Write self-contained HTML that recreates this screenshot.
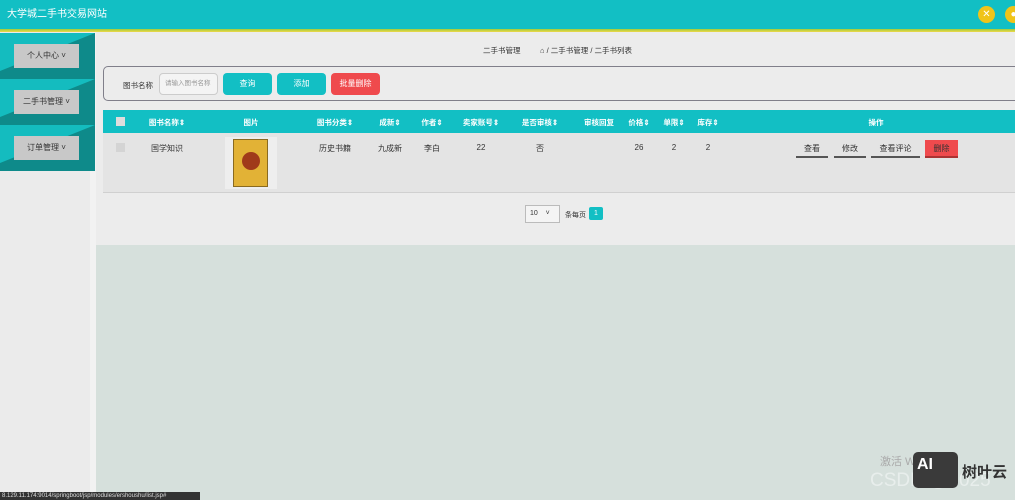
<!DOCTYPE html>
<html><head><meta charset="utf-8"><style>
*{margin:0;padding:0;box-sizing:border-box}
body{width:1015px;height:500px;overflow:hidden;background:#ececec;font-family:"Liberation Sans","Noto Sans CJK SC",sans-serif;font-size:8px;color:#333;position:relative}
.a{position:absolute}
.hdr{left:0;top:0;width:1015px;height:30px;background:#12bfc4;color:#fff;font-size:10px;line-height:30px;padding-left:7px}
.yl{left:0;top:29px;width:1015px;height:3px;background:linear-gradient(#9ccc3c,#f0d84a)}
.circ{top:6px;width:17px;height:17px;border-radius:50%;background:#f0c419;color:#fff;font-size:10px;text-align:center;line-height:17px}
.side{left:0;top:32px;width:90px;height:468px;background:#ebebeb}
.strip{left:90px;top:32px;width:6px;height:468px;background:#f2f2f2}
.blk{left:0;width:95px;height:46px;background:#0e8a8a;overflow:hidden}
.blk:before{content:"";position:absolute;left:0;top:0;border-top:38px solid #14bcbf;border-right:95px solid transparent}
.blk .b{position:absolute;left:14px;top:11px;width:65px;height:24px;background:#c8c8c8;color:#333;font-size:8px;text-align:center;line-height:24px}
.main{left:96px;top:32px;width:919px;height:213px;background:#ececec}
.grn{left:96px;top:245px;width:919px;height:255px;background:#d6e0dc}
.srch{left:103px;top:66px;width:920px;height:35px;border:1.5px solid #807f8a;border-radius:5px}
.btn{top:73px;height:22px;border-radius:4px;color:#fff;font-size:8px;text-align:center;line-height:22px}
.th{left:103px;top:110px;width:912px;height:23px;background:#12bfc4;color:#fff;font-weight:bold;font-size:7.5px}
.row{left:103px;top:133px;width:912px;height:60px;background:#e4e4e4;border-bottom:1px solid #d0d0d0}
.c{position:absolute;transform:translateX(-50%);white-space:nowrap}
.th .c{top:7px}.row .c{top:10px}
.op{top:142px;height:16px;border-bottom:2px solid #555;text-align:center;line-height:14px;font-size:8px}
</style></head><body>
<div class="a hdr">大学城二手书交易网站</div>
<div class="a yl"></div>
<div class="a circ" style="left:978px">✕</div>
<div class="a circ" style="left:1005px">●</div>
<div class="a side"></div><div class="a strip"></div>
<div class="a blk" style="top:33px"><div class="b">个人中心 ˅</div></div>
<div class="a blk" style="top:79px"><div class="b">二手书管理 ˅</div></div>
<div class="a blk" style="top:125px"><div class="b">订单管理 ˅</div></div>
<div class="a main"></div>
<div class="a grn"></div>
<div class="a" style="left:483px;top:45px;font-size:7.5px">二手书管理</div>
<div class="a" style="left:540px;top:45px;font-size:7.5px">⌂ / 二手书管理 / 二手书列表</div>
<div class="a srch"></div>
<div class="a" style="left:123px;top:80px;font-size:7.5px">图书名称</div>
<div class="a" style="left:159px;top:73px;width:59px;height:22px;border:1px solid #ccc;border-radius:4px;background:#f4f4f4;font-size:6.5px;color:#999;line-height:20px;padding-left:5px">请输入图书名称</div>
<div class="a btn" style="left:223px;width:49px;background:#12bfc4">查询</div>
<div class="a btn" style="left:277px;width:49px;background:#12bfc4">添加</div>
<div class="a btn" style="left:331px;width:49px;background:#ef4a4d">批量删除</div>
<div class="a th">
<div class="a" style="left:13px;top:7px;width:9px;height:9px;background:#ddd"></div>
<div class="c" style="left:64px">图书名称⇕</div>
<div class="c" style="left:148px">图片</div>
<div class="c" style="left:232px">图书分类⇕</div>
<div class="c" style="left:287px">成新⇕</div>
<div class="c" style="left:329px">作者⇕</div>
<div class="c" style="left:378px">卖家账号⇕</div>
<div class="c" style="left:437px">是否审核⇕</div>
<div class="c" style="left:496px">审核回复</div>
<div class="c" style="left:536px">价格⇕</div>
<div class="c" style="left:571px">单限⇕</div>
<div class="c" style="left:605px">库存⇕</div>
<div class="c" style="left:773px">操作</div>
</div>
<div class="a row">
<div class="a" style="left:13px;top:10px;width:9px;height:9px;background:#d4d4d4"></div>
<div class="c" style="left:64px">国学知识</div>
<div class="a" style="left:122px;top:4px;width:52px;height:52px;background:#eee"></div>
<div class="a" style="left:130px;top:6px;width:35px;height:48px;background:#e2b236;border:1px solid #8a6a20"><div style="position:absolute;left:8px;top:12px;width:18px;height:18px;border-radius:50%;background:#a03a1a"></div></div>
<div class="c" style="left:232px">历史书籍</div>
<div class="c" style="left:287px">九成新</div>
<div class="c" style="left:329px">李白</div>
<div class="c" style="left:378px">22</div>
<div class="c" style="left:437px">否</div>
<div class="c" style="left:536px">26</div>
<div class="c" style="left:571px">2</div>
<div class="c" style="left:605px">2</div>
</div>
<div class="a op" style="left:796px;width:32px">查看</div>
<div class="a op" style="left:834px;width:32px">修改</div>
<div class="a op" style="left:871px;width:49px">查看评论</div>
<div class="a" style="left:925px;top:140px;width:33px;height:18px;background:#ef4a4d;border-bottom:2px solid #a33;font-size:8px;text-align:center;line-height:17px;color:#333">删除</div>
<div class="a" style="left:525px;top:205px;width:35px;height:18px;border:1px solid #bbb;background:#f4f4f4;font-size:7px;line-height:16px;padding-left:4px">10 &nbsp;&nbsp;&nbsp;˅</div>
<div class="a" style="left:565px;top:210px;font-size:7px">条每页</div>
<div class="a" style="left:589px;top:207px;width:14px;height:13px;background:#12bfc4;color:#fff;font-size:7px;text-align:center;line-height:13px;border-radius:2px">1</div>
<div class="a" style="left:880px;top:453px;font-size:11px;color:#aaa">激活 Windows</div>
<div class="a" style="left:870px;top:470px;font-size:19px;color:#e8eeec">CSDN @3025</div>
<div class="a" style="left:913px;top:452px;width:45px;height:36px;background:#3a3a3a;border-radius:5px;color:#fff;font-size:16px;font-weight:bold;padding:4px">AI</div>
<div class="a" style="left:962px;top:461px;font-size:15px;color:#333;font-weight:bold">树叶云</div>
<div class="a" style="left:0;top:492px;width:200px;height:8px;background:#333;color:#ddd;font-size:6px;line-height:8px;padding-left:2px">8.129.11.174:9014/springboot/jsp/modules/ershoushu/list.jsp#</div>
</body></html>
